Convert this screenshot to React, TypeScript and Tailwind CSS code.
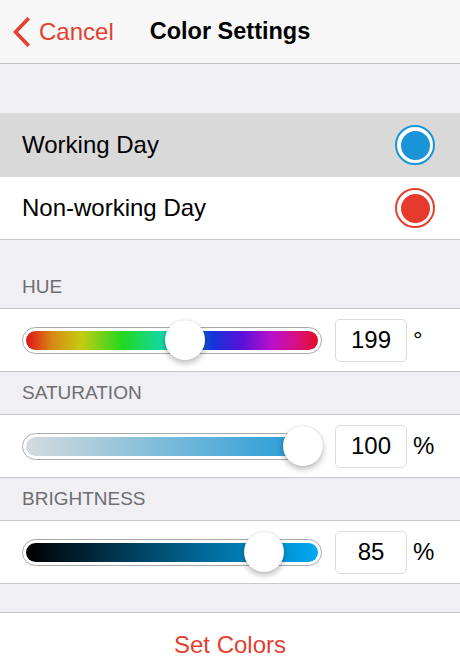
import React from "react";

const RED = "text-[#e3402f]";

type SliderProps = {
  track: string;
  thumbLeft: number;
  value: string;
  unit: string;
};

const SliderRow = ({ track, thumbLeft, value, unit }: SliderProps) => {
  return (
    <div className="h-[64px] bg-white border-y border-[#c8c7cc] flex items-center px-[22px]">
      <div className="relative w-[300px] h-[27px] rounded-full border-[1.5px] border-[#a9a9a9] bg-white p-[3px]">
        <div className={`h-full w-full rounded-full ${track}`} />
        {/* thumb sits on the track */}
        <div
          className="absolute top-1/2 -translate-y-1/2 w-[40px] h-[40px] rounded-full bg-white shadow-[0_3px_6px_rgba(0,0,0,0.28),0_0_1px_rgba(0,0,0,0.2)]"
          style={{ left: thumbLeft }}
        />
      </div>
      <div className="ml-[13px] w-[72px] h-[43px] rounded-[5px] border border-[#dcdcdc] bg-white flex items-center justify-center text-[24px] text-black">
        {value}
      </div>
      <span className="ml-[6px] text-[24px] text-black leading-none self-center">{unit}</span>
    </div>
  );
};

const SectionLabel = ({ children, h }: { children: React.ReactNode; h: string }) => (
  <div className={`${h} flex items-end pb-[10px] px-[22px] text-[19px] leading-[22px] text-[#6d6d72]`}>
    {children}
  </div>
);

const RadioMark = ({ color }: { color: "blue" | "red" }) => {
  const ring = color === "blue" ? "border-[#1a94d8]" : "border-[#e3402f]";
  const fill = color === "blue" ? "bg-[#1a94d8]" : "bg-[#e63a2c]";
  return (
    <div className={`w-[40px] h-[40px] rounded-full border-2 ${ring} bg-white flex items-center justify-center`}>
      <div className={`w-[29px] h-[29px] rounded-full ${fill}`} />
    </div>
  );
};

export default function App() {
  return (
    <div className="w-[460px] h-[661px] overflow-hidden bg-[#efeff4] font-['Liberation_Sans',Arial,sans-serif]">
      {/* nav bar */}
      <div className="h-[64px] bg-[#f7f7f8] border-b border-[#c4c4c6] grid grid-cols-[1fr_auto_1fr] items-center">
        <div className={`flex items-center pl-[12px] ${RED}`}>
          <svg width="18" height="30" viewBox="0 0 18 30" fill="none">
            <polyline points="15.5,2.5 3.5,15 15.5,27.5" stroke="#e3402f" strokeWidth="3.6" strokeLinecap="square" strokeLinejoin="miter" />
          </svg>
          <span className="ml-[9px] text-[24px]">Cancel</span>
        </div>
        <div className="text-[23.5px] font-bold text-black">Color Settings</div>
        <div />
      </div>

      <div className="h-[49px]" />

      {/* day type list */}
      <div className="border-b border-[#c8c7cc]">
        <div className="h-[64px] bg-[#d9d9d9] flex items-center justify-between pl-[22px] pr-[25px]">
          <span className="text-[24px] text-black">Working Day</span>
          <RadioMark color="blue" />
        </div>
        <div className="h-[62px] bg-white flex items-center justify-between pl-[22px] pr-[25px]">
          <span className="text-[24px] text-black">Non-working Day</span>
          <RadioMark color="red" />
        </div>
      </div>

      <SectionLabel h="h-[68px]">HUE</SectionLabel>
      <SliderRow
        track="bg-[linear-gradient(to_right,#e0121a_0%,#d88a14_9%,#c4cc12_19%,#22d820_33%,#12d8a8_47%,#1a98d0_54%,#1234d8_64%,#5a10d8_74%,#b810cc_84%,#d81080_93%,#e0101e_100%)]"
        thumbLeft={142}
        value="199"
        unit="°"
      />

      <SectionLabel h="h-[42px]">SATURATION</SectionLabel>
      <SliderRow
        track="bg-[linear-gradient(to_right,#d4dbde,#1a98d6)]"
        thumbLeft={260}
        value="100"
        unit="%"
      />

      <SectionLabel h="h-[42px]">BRIGHTNESS</SectionLabel>
      <SliderRow
        track="bg-[linear-gradient(to_right,#000000,#005f8a_55%,#00a8f2)]"
        thumbLeft={221}
        value="85"
        unit="%"
      />

      <div className="h-[28px]" />

      <div className="h-[64px] bg-white border-t border-[#c8c7cc] flex items-center justify-center">
        <span className={`text-[24px] ${RED}`}>Set Colors</span>
      </div>
    </div>
  );
}
